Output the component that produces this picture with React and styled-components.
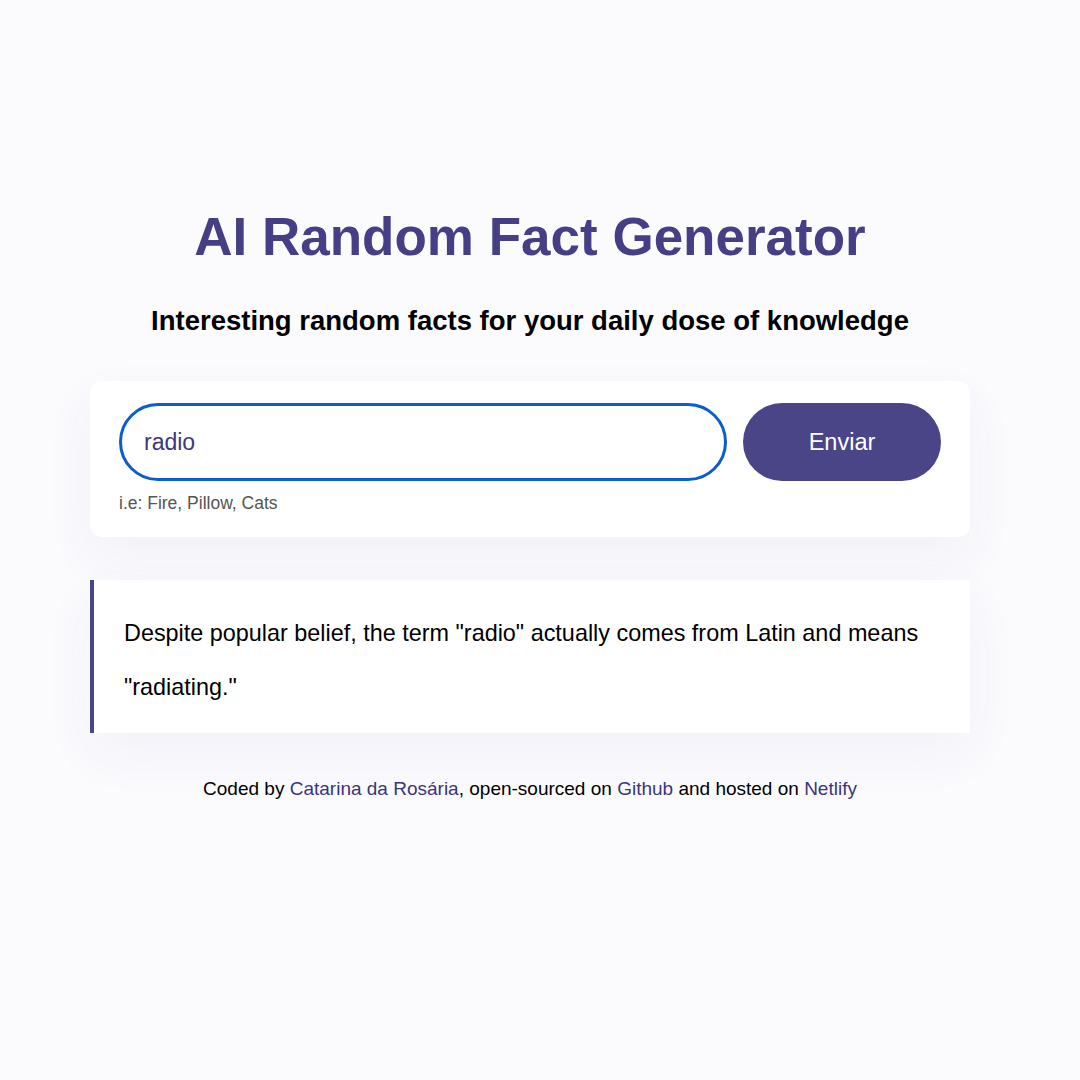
import styled, { createGlobalStyle } from "styled-components";

const GlobalStyle = createGlobalStyle`
  body {
    margin: 0;
    background: #fbfbfe;
    font-family: "Liberation Sans", Arial, sans-serif;
  }
`;

const Page = styled.div`
  min-height: 1080px;
  display: flex;
  flex-direction: column;
  align-items: center;
  padding: 197px 20px 0 0;
  box-sizing: border-box;
`;

const Title = styled.h1`
  margin: 0;
  color: #463f86;
  font-size: 53px;
  font-weight: 700;
  line-height: 80px;
`;

const Subtitle = styled.h2`
  margin: 24px 0 0;
  color: #000;
  font-size: 27.5px;
  font-weight: 700;
  line-height: 40px;
`;

const Card = styled.form`
  margin-top: 40px;
  width: 880px;
  box-sizing: border-box;
  background: #fff;
  border-radius: 12px;
  padding: 22px 29px 23px 29px;
  box-shadow: 0 20px 50px rgba(60, 60, 140, 0.06);
`;

const Row = styled.div`
  display: flex;
  gap: 16px;
`;

const SearchInput = styled.input`
  flex: 1;
  height: 78px;
  box-sizing: border-box;
  border: 3px solid #0b5ccf;
  border-radius: 40px;
  padding: 0 22px;
  font-family: inherit;
  font-size: 23px;
  color: #3e3680;
  outline: none;
`;

const SubmitButton = styled.button`
  width: 198px;
  height: 78px;
  border: none;
  border-radius: 40px;
  background: #4a4587;
  color: #fff;
  font-family: inherit;
  font-size: 23.5px;
`;

const Hint = styled.div`
  margin-top: 12px;
  color: #555;
  font-size: 17.5px;
`;

const Fact = styled.p`
  margin: 43px 0 0;
  width: 880px;
  box-sizing: border-box;
  background: #fff;
  border-left: 4px solid #4a4587;
  padding: 26px 30px 19px 30px;
  font-size: 23.4px;
  line-height: 54px;
  color: #000;
  box-shadow: 0 20px 50px rgba(60, 60, 140, 0.05);
`;

const Footer = styled.footer`
  margin-top: 45px;
  font-size: 19px;
  color: #000;
`;

const Link = styled.a`
  color: #3b3480;
  text-decoration: none;
`;

export default function App() {
  return (
    <>
      <GlobalStyle />
      <Page>
        <Title>AI Random Fact Generator</Title>
        <Subtitle>Interesting random facts for your daily dose of knowledge</Subtitle>
        <Card onSubmit={(e) => e.preventDefault()}>
          <Row>
            <SearchInput defaultValue="radio" />
            <SubmitButton type="submit">Enviar</SubmitButton>
          </Row>
          <Hint>i.e: Fire, Pillow, Cats</Hint>
        </Card>
        <Fact>
          Despite popular belief, the term "radio" actually comes from Latin and
          means "radiating."
        </Fact>
        <Footer>
          Coded by <Link href="#">Catarina da Rosária</Link>, open-sourced on{" "}
          <Link href="#">Github</Link> and hosted on <Link href="#">Netlify</Link>
        </Footer>
      </Page>
    </>
  );
}
